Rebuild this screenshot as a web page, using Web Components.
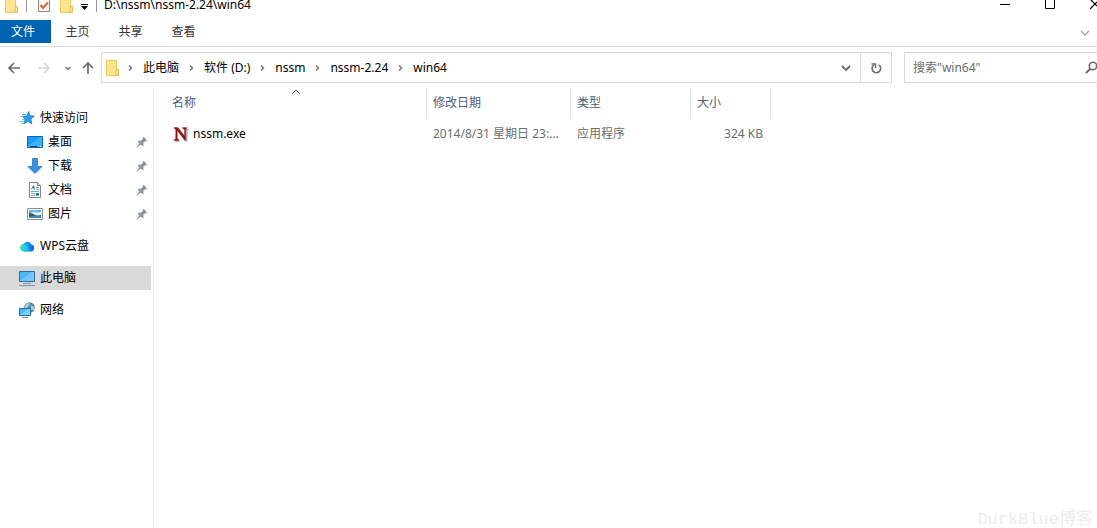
<!DOCTYPE html>
<html lang="zh-CN">
<head>
<meta charset="utf-8">
<title>win64</title>
<style>
  html, body { margin: 0; min-height: 100%; background: #fff; }
  body {
    font: 12px/16px "Noto Sans", "Noto Sans CJK SC", sans-serif;
    color: #000;
    overflow: hidden;
  }
</style>
</head>
<body>
<explorer-window>
  <title-bar slot="title" path="D:\nssm\nssm-2.24\win64"></title-bar>
  <ribbon-tabs slot="ribbon" tabs="文件,主页,共享,查看"></ribbon-tabs>
  <address-row slot="address" path="此电脑|软件 (D:)|nssm|nssm-2.24|win64" search='搜索"win64"'></address-row>
  <nav-pane slot="nav">
    <nav-item icon="star">快速访问</nav-item>
    <nav-item icon="desktop" level="1" pinned>桌面</nav-item>
    <nav-item icon="download" level="1" pinned>下载</nav-item>
    <nav-item icon="document" level="1" pinned>文档</nav-item>
    <nav-item icon="picture" level="1" pinned>图片</nav-item>
    <nav-item icon="cloud" spaced>WPS云盘</nav-item>
    <nav-item icon="pc" spaced selected>此电脑</nav-item>
    <nav-item icon="network" spaced>网络</nav-item>
  </nav-pane>
  <file-list slot="files"></file-list>
  <water-mark slot="mark">DurkBlue博客</water-mark>
</explorer-window>

<script>
const ICONS = {
  folder: '<path d="M2.500.5h10v15h-10z" fill="#ffe591" stroke="#ecc95c"/><path d="M12 9.500h2.500v6H12z" fill="#ffe591" stroke="#e6bf4a"/>',
  properties: '<path d="M2.500 1.500h11v13h-11z" fill="#f8f8f8" stroke="#8a8a8a"/><path d="M4.500 8l2.500 3L12 5.500" fill="none" stroke="#e0602c" stroke-width="2"/>',
  star: '<path d="M9.800 1.500l1.300 4.300 4.400.2-3.600 3 1 4.900-3.900-2.500-4.100 2.400 1.300-4.600L3 6.300l4.600-.3z" fill="#2b9fe8" stroke="#1878be" stroke-width=".7"/><path d="M3 4.500h4M1.500 6.500h3M3 9.500h3M.5 11.500h4M2 13.500h3" stroke="#63b6e8"/>',
  desktop: '<path d="M.5 2.500h15v11H.5z" fill="#1b9cf5" stroke="#0967ad"/><path d="M1 12L13 3h2v9z" fill="#3cb2ff"/><path d="M1 12.500h14" stroke="#07436f"/><path d="M1.500 12.500h1M10.500 12.500h1M12.500 12.500h2" stroke="#fff"/>',
  download: '<path d="M5.500.5h5v8h4.500L8 15.500 1 8.500h4.500z" fill="#3792e0" stroke="#2477bd" stroke-width=".8"/>',
  document: '<path d="M2.500.5h8l3 3v12h-11z" fill="#fff" stroke="#848484"/><path d="M10.500.5v3h3" fill="#ddd" stroke="#848484"/><path d="M9 5.500h3M9 7.500h3M4 9.500h8M4 11.500h4M4 13.500h4M9 13.500h3" stroke="#6ca9c6"/><path d="M4 7.500l2-4h1l1 4H7L6 5.500l-1 2zM9 11h3v2H9z" fill="#317b9f"/>',
  picture: '<path d="M.5 2.500h15v11H.5z" fill="#fff" stroke="#8b8f93"/><path d="M2 4h12v8H2z" fill="#6fb4ea"/><path d="M4 8q1-3 4-2t6 0v3H4z" fill="#e2f2fb"/><path d="M2 7q4 0 6 2t6 0v2H2z" fill="#2f6259"/><path d="M2 11q6-2 12-1v2H2z" fill="#4b83b4"/>',
  cloud: '<defs><linearGradient id="g"><stop offset=".3" stop-color="#18a4f0"/><stop offset="1" stop-color="#0660e6"/></linearGradient><linearGradient id="h"><stop stop-color="#44e8b8"/><stop offset="1" stop-color="#14a8f0"/></linearGradient></defs><path d="M5 13.500L4.500 6A4.500 4.500 0 0 1 12.500 6.500a3.600 3.600 0 0 1-.4 7z" fill="url(#g)"/><path d="M4.600 13.500a3.900 3.900 0 1 1 3.500-6q1.400 3.500 3 6z" fill="url(#h)"/>',
  pc: '<path d="M.5 1.500h15v10H.5z" fill="#4ab7f8" stroke="#2e6e9d"/><path d="M1 11L13 2h2v9z" fill="#74c9fc"/><path d="M4 13.500h8M0 15.500h16" stroke="#8098ab"/>',
  network: '<circle cx="10.500" cy="5.500" r="5.300" fill="#4c87a6"/><path d="M7 2q4-2.500 4 1L8 6H5.500zM12 3l3 2v3l-3 0z" fill="#a9cfd4"/><path d="M.5 6.500h11v7H.5z" fill="#4ab9f8" stroke="#286c9e"/><path d="M1 13L9 7h2v6z" fill="#79cffd"/><path d="M3 15.500h6" stroke="#8098ab"/>',
  pin: '<path d="M10 1l5 5-1.500.8-.8-.3-2.900 2.900.4 3-1.700 1.400-2.500-2.500L1.500 15.500l-1-.2 4.200-5.200L2.200 7.600l1.400-1.500 3 .3 2.700-2.700-.4-1.400z" fill="#8a959d"/>',
  exe: '<g opacity=".4" transform="translate(1 1)"><path d="M1 2h4l7 9V3H9V2h6v1h-1.500v12h-1L4 4.500V14h2v1H1v-1h1.500V3H1z" fill="#444"/></g><path d="M1 1.500h4l6.500 8.500V3L9.500 2.500v-1H14v1l-1.200.5v11.500h-1L4 4v9l2 .5v1H1v-1l1.700-.5V3L1 2.500z" fill="#8d1318" stroke="#8d1318" stroke-width=".3"/>',
  back: '<path d="M14 8H3M8 3L3 8l5 5" fill="none" stroke="#6c6c6c" stroke-width="1.700"/>',
  forward: '<path d="M2 8h11M8 3l5 5-5 5" fill="none" stroke="#d8d8d8" stroke-width="1.700"/>',
  up: '<path d="M8 14V3M3 8l5-5 5 5" fill="none" stroke="#6c6c6c" stroke-width="1.700"/>',
  right: '<path d="M7 5.500L9.500 8 7 10.500" fill="none" stroke="#777" stroke-width="1.500"/>',
  smallDown: '<path d="M5.500 7L8 9.500 10.500 7" fill="none" stroke="#777" stroke-width="1.500"/>',
  down: '<path d="M4 6l4 4 4-4" fill="none" stroke="#6c6c6c" stroke-width="1.800"/>',
  ribbonDown: '<path d="M4 7l4 4 4-4" fill="none" stroke="#a6a6a6" stroke-width="1.300"/>',
  sort: '<path d="M4 10l4-4 4 4" fill="none" stroke="#666"/>',
  refresh: '<path d="M6 4.800A4.300 4.300 0 1 0 11 5" fill="none" stroke="#707070" stroke-width="1.600"/><path d="M3.500 4h4v4" fill="none" stroke="#707070" stroke-width="1.500"/>',
  search: '<circle cx="10" cy="6" r="3.700" fill="none" stroke="#6c6c6c" stroke-width="1.600"/><path d="M7.500 8.500L3 13" stroke="#6c6c6c" stroke-width="2"/>',
  customize: '<path d="M5 7.500h7" stroke="#000"/><path d="M5 9h7l-3.500 4z"/>',
  minimize: '<path d="M3 7.500h10" stroke="#000"/>',
  maximize: '<path d="M3.500 1.500h9v10h-9z" fill="none" stroke="#000"/>',
  close: '<path d="M3 2l10 10M13 2L3 12" stroke="#000" stroke-width="1.200"/>'
};
const icon = (name, cls = '') =>
  `<svg class="${cls}" width="16" height="16" viewBox="0 0 16 16" aria-hidden="true">${ICONS[name]}</svg>`;

const BASE = `
  :host, * { box-sizing: border-box; }
  svg { display: block; flex: none; }
  button { font: inherit; color: inherit; background: none; border: 0; padding: 0; margin: 0;
    display: flex; align-items: center; justify-content: center; }
`;

class BaseElement extends HTMLElement {
  connectedCallback() {
    if (this.shadowRoot) return;
    this.attachShadow({ mode: 'open' }).innerHTML = `<style>${BASE}${this.styles()}</style>${this.markup()}`;
  }
}

customElements.define('explorer-window', class extends BaseElement {
  styles() { return `
    :host { display: flex; flex-direction: column; min-height: 100vh; position: relative; overflow: hidden; }
    main { flex: 1; display: flex; align-items: stretch; }
    slot[name=files]::slotted(*) { flex: 1; min-width: 0; }
  `; }
  markup() { return `<slot name="title"></slot><slot name="ribbon"></slot><slot name="address"></slot>
    <main><slot name="nav"></slot><slot name="files"></slot></main><slot name="mark"></slot>`; }
});

customElements.define('title-bar', class extends BaseElement {
  styles() { return `
    :host { display: flex; align-items: flex-end; height: 20px; overflow: hidden; }
    .row { flex: 1; flex-shrink: 0; display: flex; align-items: center; height: 30px; padding-left: 3px; margin-right: -20px; }
    .sep { width: 1px; height: 14px; background: #999; }
    .first { margin: 0 9px 0 7px; }
    .last { margin: 0 7px 0 4px; }
    .path { line-height: 10px; }
    .quick { display: flex; gap: 6px; }
    .menu { margin-left: 2px; }
    .caption { display: flex; margin-left: auto; }
    .caption button { width: 45px; height: 30px; }
  `; }
  markup() { return `<div class="row">
    ${icon('folder')}<span class="sep first"></span>
    <div class="quick"><button aria-label="属性">${icon('properties')}</button><button aria-label="新建文件夹">${icon('folder')}</button></div>
    <button class="menu" aria-label="自定义快速访问工具栏">${icon('customize')}</button>
    <span class="sep last"></span><span class="path">${this.getAttribute('path')}</span>
    <div class="caption"><button aria-label="最小化">${icon('minimize')}</button><button aria-label="最大化">${icon('maximize')}</button><button aria-label="关闭">${icon('close')}</button></div>
  </div>`; }
});

customElements.define('ribbon-tabs', class extends BaseElement {
  styles() { return `
    :host { display: flex; height: 27px; border-bottom: 1px solid #dadbdc; padding-right: 4px; }
    button { width: 53px; height: 24px; color: #333; }
    button:first-of-type { width: 51px; height: 23px; background: #0063b1; color: #fff; padding-right: 5px; }
    .collapse { width: 16px; margin-left: auto; }
  `; }
  markup() { return this.getAttribute('tabs').split(',').map(t => `<button>${t}</button>`).join('') +
    `<button class="collapse" aria-label="展开功能区">${icon('ribbonDown')}</button>`; }
});

customElements.define('address-row', class extends BaseElement {
  styles() { return `
    :host { display: flex; align-items: center; height: 41px; }
    .history { display: flex; align-items: center; width: 101px; padding-left: 6px; }
    .forward { margin-left: 14px; }
    .recent { margin-left: 8px; }
    .up { margin-left: 4px; }
    .box { flex: 1; min-width: 0; display: flex; height: 31px; border: 1px solid #d9d9d9; }
    .crumbs { flex: 1; display: flex; align-items: center; padding-left: 2px; }
    .crumbs > .sep { width: 25px; padding-left: 4px; }
    .crumbs .lead { margin-left: -2px; }
    .drop { width: 28px; }
    .refresh { width: 31px; border-left: 1px solid #d9d9d9; }
    .search { display: flex; align-items: center; width: 193px; height: 31px; margin-left: 12px; border: 1px solid #d9d9d9; border-right: 0; padding-left: 8px; }
    input { flex: 1; min-width: 0; border: 0; outline: 0; padding: 0; font: inherit; background: none; }
    input::placeholder { color: #6d6d6d; opacity: 1; }
    .search button { margin-right: -2px; }
  `; }
  markup() {
    const crumbs = this.getAttribute('path').split('|')
      .map((p, i) => `<span class="sep${i ? '' : ' lead'}">${icon('right')}</span><button>${p}</button>`).join('');
    const label = this.getAttribute('search').replace(/"/g, '&quot;');
    return `<div class="history"><button aria-label="返回">${icon('back')}</button><button class="forward" aria-label="前进">${icon('forward')}</button>
      <button class="recent" aria-label="最近浏览的位置">${icon('smallDown')}</button><button class="up" aria-label="上移">${icon('up')}</button></div>
    <div class="box"><div class="crumbs">${icon('folder')}${crumbs}</div>
      <button class="drop" aria-label="以前的位置">${icon('down')}</button><button class="refresh" aria-label="刷新">${icon('refresh')}</button></div>
    <div class="search"><input type="text" aria-label="${label}" placeholder="${label}"><button aria-label="搜索">${icon('search')}</button></div>`;
  }
});

customElements.define('nav-pane', class extends BaseElement {
  styles() { return `
    :host { display: block; width: 154px; flex: none; padding: 18px 2px 0 0; border-right: 1px solid #f0f0f0; }
  `; }
  markup() { return `<nav aria-label="导航窗格"><slot></slot></nav>`; }
});

customElements.define('nav-item', class extends BaseElement {
  styles() { return `
    :host { display: block; }
    :host([spaced]) { margin-top: 8px; }
    :host([selected]) { background: #d9d9d9; }
    a { display: flex; align-items: center; gap: 5px; height: 24px; padding-left: 19px; color: inherit; text-decoration: none; }
    :host([level="1"]) a { padding-left: 27px; }
    .pin { margin-left: auto; width: 12px; height: 12px; margin-right: 3px; }
  `; }
  markup() { return `<a href="#">${icon(this.getAttribute('icon'))}<slot></slot>${this.hasAttribute('pinned') ? icon('pin', 'pin') : ''}</a>`; }
});

customElements.define('file-list', class extends BaseElement {
  styles() { return `
    :host { display: block; }
    table { table-layout: fixed; width: 617px; border-collapse: separate; border-spacing: 0; }
    .name { width: 273px; } .date { width: 144px; } .type { width: 120px; } .size { width: 80px; }
    th, td { padding: 0 6px; text-align: left; font-weight: 400; white-space: nowrap; overflow: hidden; text-overflow: ellipsis; }
    th { height: 30px; border-right: 1px solid #e5e5e5; color: #4c607a; position: relative; }
    td { height: 31px; color: #6d6d6d; }
    th:first-child { padding-left: 18px; }
    td:first-child { padding-left: 19px; color: #000; }
    td:last-child { text-align: right; padding-right: 8px; }
    .file { display: flex; align-items: center; gap: 4px; }
    .sort { position: absolute; top: -4px; left: calc(50% - 2px); }
  `; }
  markup() { return `<table>
    <colgroup><col class="name"><col class="date"><col class="type"><col class="size"></colgroup>
    <thead><tr><th aria-sort="ascending">名称${icon('sort', 'sort')}</th><th>修改日期</th><th>类型</th><th>大小</th></tr></thead>
    <tbody><tr><td><span class="file">${icon('exe')}nssm.exe</span></td><td>2014/8/31 星期日 23:...</td><td>应用程序</td><td>324 KB</td></tr></tbody>
  </table>`; }
});

customElements.define('water-mark', class extends BaseElement {
  styles() { return `
    :host { position: absolute; right: 4px; bottom: -2px; color: #ececec; pointer-events: none;
      font: 17px/20px "Liberation Mono", "Noto Sans CJK SC", monospace; }
  `; }
  markup() { return `<slot></slot>`; }
});
</script>
</body>
</html>
